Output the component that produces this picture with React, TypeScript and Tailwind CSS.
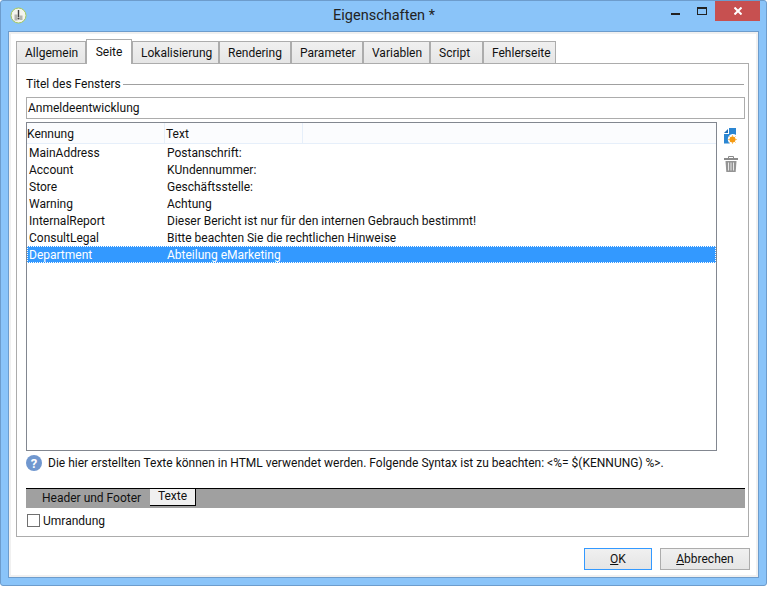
const tabs = ["Allgemein", "Seite", "Lokalisierung", "Rendering", "Parameter", "Variablen", "Script", "Fehlerseite"]
const tabWidths = ["w-[70px]", "w-[46px]", "w-[87px]", "w-[72px]", "w-[72px]", "w-[67px]", "w-[53px]", "w-[73px]"]

const rows = [
  ["MainAddress", "Postanschrift:"],
  ["Account", "KUndennummer:"],
  ["Store", "Geschäftsstelle:"],
  ["Warning", "Achtung"],
  ["InternalReport", "Dieser Bericht ist nur für den internen Gebrauch bestimmt!"],
  ["ConsultLegal", "Bitte beachten Sie die rechtlichen Hinweise"],
]

function AppIcon() {
  return (
    <svg width="17" height="17" viewBox="0 0 17 17">
      <circle cx="8.5" cy="8.5" r="7.5" fill="#f4f4ee" stroke="#a4c85a" />
      <path d="M4.5 7.5h3v6h-3zM9.5 8.5h3v4.5h-3z" fill="#b4b4b0" />
      <path d="M8.5 3v7" stroke="#444" strokeWidth="1.4" fill="none" />
      <circle cx="8.5" cy="11.5" r="1" fill="#444" />
    </svg>
  )
}

function AddIcon() {
  return (
    <svg width="13" height="16" viewBox="0 0 13 16">
      <path d="M0 5 L4 1 V5 Z" fill="#1f6fb8" />
      <path d="M5 0h7v7a5 5 0 0 0-6 8.5H0V6h5z" fill="#2b86d2" />
      <path d="M8.5 7v9M4 11.5h9M5.3 8.3l6.4 6.4M11.7 8.3l-6.4 6.4" stroke="#fbc878" strokeWidth="1" />
      <circle cx="8.5" cy="11.5" r="3" fill="#f59a12" />
    </svg>
  )
}

function TrashIcon() {
  return (
    <svg width="14" height="16" viewBox="0 0 14 16">
      <path d="M4.5 2V.5h5V2" fill="none" stroke="#8a8a8a" />
      <rect x="0" y="2" width="14" height="2" fill="#8a8a8a" />
      <path d="M1.5 5h11l-.8 11H2.3z" fill="#949494" />
      <path d="M4.5 6.5v8M7 6.5v8M9.5 6.5v8" stroke="#e8e8e8" strokeWidth="1" />
    </svg>
  )
}

function HelpIcon() {
  return (
    <div className="flex h-4 w-4 items-center justify-center rounded-full bg-[#7097cf] text-[13px] font-bold leading-none text-white">
      ?
    </div>
  )
}

export default function App() {
  return (
    <div className="h-[604px] w-[783px] bg-white font-['Roboto',sans-serif] text-[12px] leading-none text-[#111]">
      <div className="flex h-[586px] w-[767px] flex-col rounded-[3px] border border-[#6d9ccc] bg-[#8ac4f9]">
        <div className="flex h-[30px] shrink-0 items-start">
          <div className="ml-[9px] mt-[6px]">
            <AppIcon />
          </div>
          <div className="mt-[6px] flex-1 pl-[70px] text-center text-[14.5px] leading-[18px] text-[#222]">Eigenschaften *</div>
          <div className="mt-[12px] h-[2px] w-[9px] bg-[#222]" />
          <div className="ml-[17px] mt-[6px] h-[8px] w-[10px] border border-t-2 border-[#222]" />
          <div className="ml-[8px] mr-[6px] flex h-[20px] w-[45px] items-center justify-center bg-[#c75050]">
            <svg width="8" height="8" viewBox="0 0 8 8">
              <path d="M.5.5l7 7M7.5.5l-7 7" stroke="#fff" strokeWidth="2" />
            </svg>
          </div>
        </div>

        <div className="mx-[7px] mb-[7px] flex flex-1 flex-col border border-[#6d9ccc]">
          <div className="flex flex-1 flex-col border-2 border-[#f0f0f0] bg-white pl-[5px] pr-[7px] pt-[5px]">
            <div className="relative z-10 flex h-[24px] items-end">
              {tabs.map((tab, i) => (
                <div
                  key={tab}
                  className={
                    tab === "Seite"
                      ? `${tabWidths[i]} -mb-px flex h-[25px] items-center justify-center border border-b-0 border-[#acacac] bg-white`
                      : `${tabWidths[i]} -mb-px flex h-[23px] items-center border border-[#acacac] bg-gradient-to-b from-[#f0f0f0] to-[#e5e5e5] pl-[8px]`
                  }
                >
                  {tab}
                </div>
              ))}
            </div>

            <div className="flex h-[474px] flex-col border border-[#acacac] pl-[9px] pr-[3px]">
              <div className="mt-[12px] flex h-[16px] items-center pr-[1px]">
                <span>Titel des Fensters</span>
                <div className="ml-[2px] h-px flex-1 bg-[#a0a0a0]" />
              </div>
              <div className="mt-[5px] flex h-[22px] items-center border border-[#acacac] px-[1px]">Anmeldeentwicklung</div>

              <div className="mt-[3px] flex">
                <div className="h-[329px] w-[691px] border border-[#828790]">
                  <div className="flex h-[21px] border-b border-[#e6effa] bg-[#fbfcfe]">
                    <div className="flex w-[138px] items-center border-r border-[#e6effa] pt-[1px]">Kennung</div>
                    <div className="flex w-[138px] items-center border-r border-[#e6effa] pl-[1px] pt-[1px]">Text</div>
                  </div>
                  {rows.map((row) => (
                    <div key={row[0]} className="flex h-[17px] items-center pl-[2px]">
                      <div className="w-[138px]">{row[0]}</div>
                      <div>{row[1]}</div>
                    </div>
                  ))}
                  <div className="flex h-[17px] items-center border border-dotted border-white bg-[#3399ff] pl-[1px] text-white">
                    <div className="w-[138px]">Department</div>
                    <div>Abteilung eMarketing</div>
                  </div>
                </div>
                <div className="ml-[7px] flex flex-col gap-[12px] pt-[6px]">
                  <AddIcon />
                  <TrashIcon />
                </div>
              </div>

              <div className="mt-[4px] flex h-[16px] items-center gap-[6px]">
                <HelpIcon />
                <span>Die hier erstellten Texte können in HTML verwendet werden. Folgende Syntax ist zu beachten: &lt;%= $(KENNUNG) %&gt;.</span>
              </div>

              <div className="mt-[17px] flex h-[20px] items-start border-t border-black bg-[#a0a0a0]">
                <div className="ml-[16px] flex h-[17px] w-[108px] items-center">Header und Footer</div>
                <div className="flex h-[17px] w-[46px] items-center justify-center border-b border-r border-black bg-[#f0f0f0] pb-[2px]">Texte</div>
              </div>

              <div className="mt-[6px] flex items-center gap-[3px] pl-[1px]">
                <div className="h-[13px] w-[13px] border border-[#707070] bg-white" />
                <span>Umrandung</span>
              </div>
            </div>

            <div className="mt-[11px] flex justify-end gap-[8px]">
              <button className="h-[22px] w-[68px] border border-[#3399ff] bg-gradient-to-b from-[#f0f0f0] to-[#e5e5e5]">
                <span className="underline">O</span>K
              </button>
              <button className="mr-[-1px] h-[22px] w-[90px] border border-[#acacac] bg-gradient-to-b from-[#f0f0f0] to-[#e5e5e5]">
                <span className="underline">A</span>bbrechen
              </button>
            </div>
          </div>
        </div>
      </div>
    </div>
  )
}
